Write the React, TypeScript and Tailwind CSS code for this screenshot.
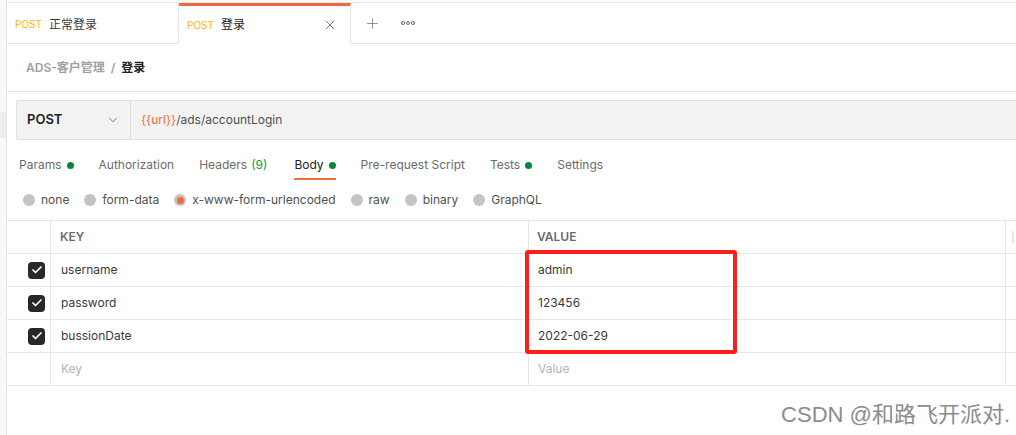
import { ChevronDown, X, Plus, Check } from "lucide-react";

const tabs = [
  { name: "Params", dot: true },
  { name: "Authorization" },
  { name: "Headers", count: "(9)" },
  { name: "Body", dot: true, active: true },
  { name: "Pre-request Script" },
  { name: "Tests", dot: true },
  { name: "Settings" },
];

const bodyTypes = [
  { name: "none" },
  { name: "form-data" },
  { name: "x-www-form-urlencoded", checked: true },
  { name: "raw" },
  { name: "binary" },
  { name: "GraphQL" },
];

const rows = [
  { key: "username", value: "admin" },
  { key: "password", value: "123456" },
  { key: "bussionDate", value: "2022-06-29" },
];

export default function App() {
  return (
    <div className="relative flex h-[435px] w-[1016px] overflow-hidden bg-white font-['Inter','Noto_Sans_CJK_SC',sans-serif] text-[12px] text-[#505050]">
      {/* left rail */}
      <div className="flex w-[7px] shrink-0 flex-col border-r border-[#e6e6e6] bg-[#f8f8f8]">
        <div className="mt-[112px] h-[26px] bg-[#ededed]" />
      </div>

      <div className="flex min-w-0 flex-1 flex-col">
        <div className="h-[3px] border-b border-[#e6e6e6] bg-[#fafafa]" />

        {/* request tabs */}
        <div className="flex h-[41px] items-stretch">
          <div className="flex w-[172px] items-center gap-[7px] border-r border-b border-[#e6e6e6] pt-[3px] pl-[8px]">
            <span className="text-[10px] text-[#ffb400]">POST</span>
            <span className="text-[12px] text-[#3a3a3a]">正常登录</span>
          </div>
          <div className="flex w-[172px] items-center gap-[7px] border-t-[3px] border-r border-[#f26b3a] border-r-[#e6e6e6] pl-[8px] pr-[12px]">
            <span className="text-[10px] text-[#ffb400]">POST</span>
            <span className="text-[12px] text-[#212121]">登录</span>
            <X className="ml-auto size-[16px] text-[#6b6b6b]" strokeWidth={1.3} />
          </div>
          <div className="flex flex-1 items-center border-b border-[#e6e6e6]">
            <Plus className="ml-[13px] size-[17px] text-[#8a8a8a]" strokeWidth={1.3} />
            <div className="ml-[20px] flex gap-[1px]">
              <span className="size-[4px] rounded-full border border-[#6b6b6b]" />
              <span className="size-[4px] rounded-full border border-[#6b6b6b]" />
              <span className="size-[4px] rounded-full border border-[#6b6b6b]" />
            </div>
          </div>
        </div>

        {/* breadcrumb */}
        <div className="flex h-[48px] items-center gap-[6px] border-b border-[#e6e6e6] pl-[19px] text-[12px] font-semibold">
          <span className="text-[#a0a0a0]">ADS-客户管理</span>
          <span className="text-[#a0a0a0]">/</span>
          <span className="text-[#212121]">登录</span>
        </div>

        {/* url bar */}
        <div className="mt-[8px] ml-[9px] flex h-[40px] rounded-l-[3px] border border-r-0 border-[#e0e0e0] bg-[#f2f2f2]">
          <div className="flex w-[114px] items-center border-r border-[#e0e0e0] pr-[10px] pl-[10px]">
            <span className="text-[13px] font-semibold text-[#212121]">POST</span>
            <ChevronDown className="ml-auto size-[14px] text-[#6b6b6b]" strokeWidth={1.5} />
          </div>
          <div className="flex items-center pl-[10px] text-[#505050]">
            <span className="text-[#f26b3a]">{"{{url}}"}</span>
            <span>/ads/accountLogin</span>
          </div>
        </div>

        {/* tabs */}
        <div className="mt-[10px] flex h-[30px] items-stretch gap-[25px] pl-[12px]">
          {tabs.map((t) => (
            <div
              key={t.name}
              className={
                t.active
                  ? "flex items-center gap-[5px] border-b-2 border-[#f26b3a] pt-[2px] text-[#212121]"
                  : "flex items-center gap-[5px] border-b-2 border-transparent pt-[2px] text-[#6b6b6b]"
              }
            >
              <span>
                {t.name}
                {t.count && <span className="mr-[2px] ml-[4px] text-[#0b9a40]">{t.count}</span>}
              </span>
              {t.dot && <span className="size-[7px] rounded-full bg-[#0a8537]" />}
            </div>
          ))}
        </div>

        {/* body type */}
        <div className="mt-[8px] flex h-[24px] items-center gap-[15px] pl-[16px]">
          {bodyTypes.map((b) => (
            <div key={b.name} className="flex items-center gap-[6px] text-[#505050]">
              <span className="flex size-[12px] items-center justify-center rounded-full bg-[#c4c4c4]">
                {b.checked && <span className="size-[7px] rounded-full bg-[#f26b3a]" />}
              </span>
              <span>{b.name}</span>
            </div>
          ))}
        </div>

        {/* table */}
        <div className="mt-[8px] border-t border-[#e6e6e6]">
          <div className="flex h-[33px] border-b border-[#e6e6e6] text-[12px] font-semibold text-[#6b6b6b]">
            <div className="w-[44px] border-r border-[#e6e6e6]" />
            <div className="flex w-[478px] items-center border-r border-[#e6e6e6] pl-[9px]">KEY</div>
            <div className="flex w-[477px] items-center border-r border-[#e6e6e6] pl-[8px]">VALUE</div>
            <div className="flex flex-1 items-center pl-[6px]">
              <span className="h-[12px] w-[2px] bg-[#e6e6e6]" />
            </div>
          </div>
          {rows.map((r) => (
            <div key={r.key} className="flex h-[33px] border-b border-[#e6e6e6] text-[#3a3a3a]">
              <div className="flex w-[44px] items-center justify-end border-r border-[#e6e6e6] pr-[5px]">
                <span className="flex size-[17px] items-center justify-center rounded-[4px] bg-[#282828]">
                  <Check className="size-[12px] text-white" strokeWidth={3.5} />
                </span>
              </div>
              <div className="flex w-[478px] items-center border-r border-[#e6e6e6] pl-[10px]">{r.key}</div>
              <div className="flex w-[477px] items-center border-r border-[#e6e6e6] pl-[9px]">{r.value}</div>
              <div className="flex-1" />
            </div>
          ))}
          <div className="flex h-[33px] border-b border-[#e6e6e6] text-[#b3b3b3]">
            <div className="w-[44px] border-r border-[#e6e6e6]" />
            <div className="flex w-[478px] items-center border-r border-[#e6e6e6] pl-[10px]">Key</div>
            <div className="flex w-[477px] items-center border-r border-[#e6e6e6] pl-[9px]">Value</div>
            <div className="flex-1" />
          </div>
        </div>
      </div>

      {/* annotation */}
      <div className="absolute top-[250px] left-[525px] h-[104px] w-[212px] rounded-[3px] border-[4px] border-[#ff1f1a]" />

      {/* watermark */}
      <div className="absolute right-[6px] bottom-[9px] font-['Liberation_Sans','Noto_Sans_CJK_SC',sans-serif] text-[22px] leading-none text-[#8c8c8c]">
        CSDN @和路飞开派对.
      </div>
    </div>
  );
}
